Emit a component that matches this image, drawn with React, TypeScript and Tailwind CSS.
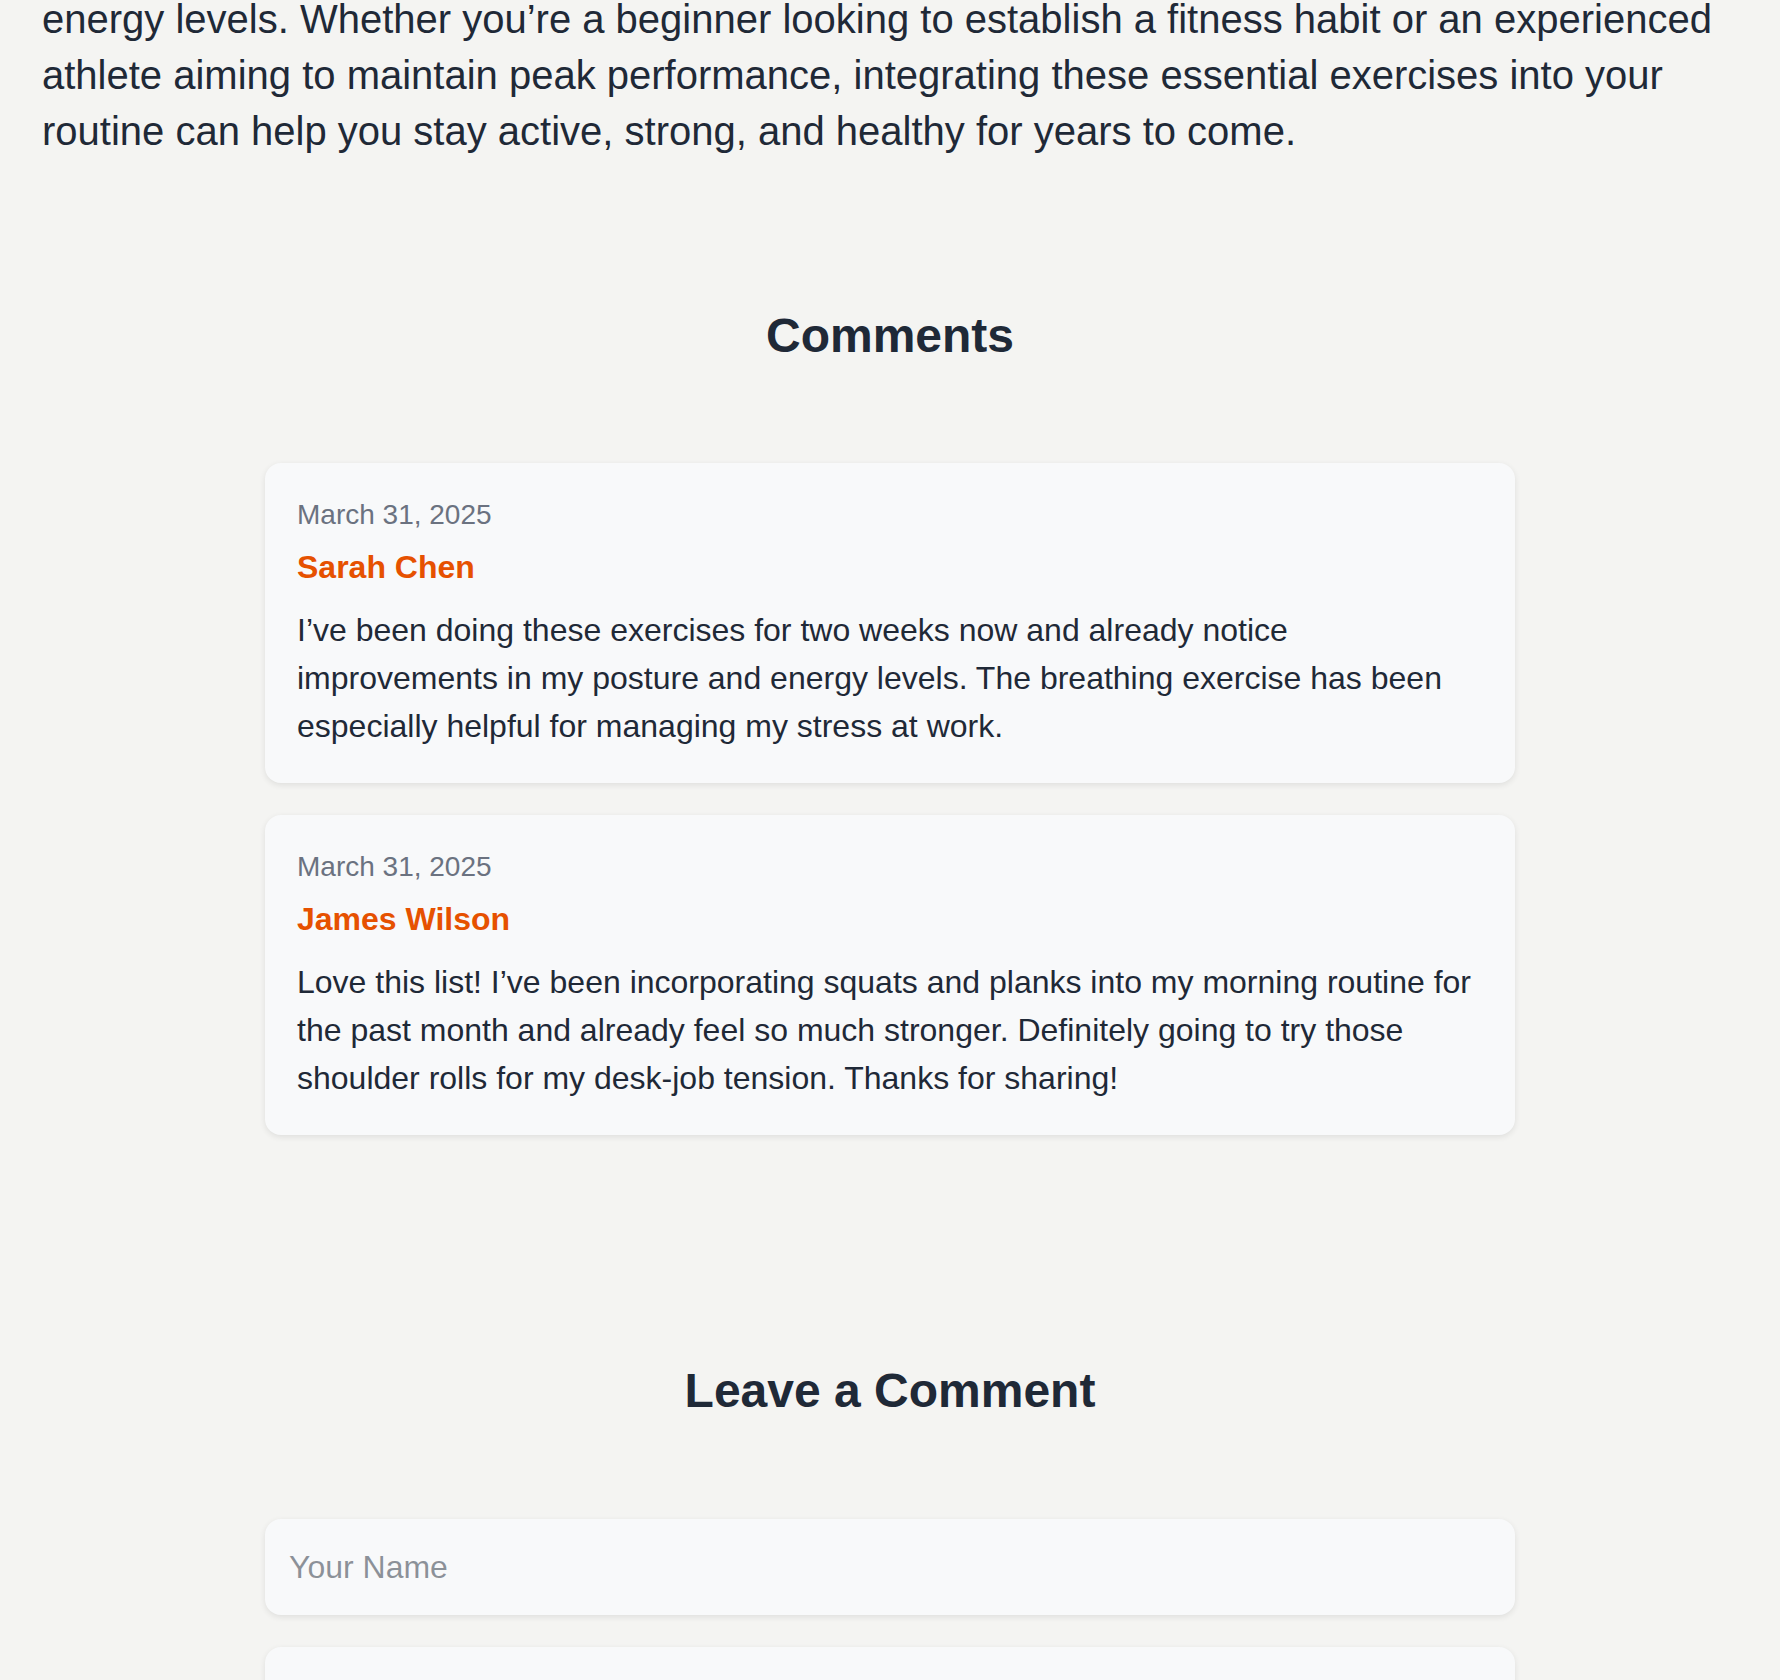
import React from "react";

const comments = [
  {
    date: "March 31, 2025",
    name: "Sarah Chen",
    text: "I’ve been doing these exercises for two weeks now and already notice improvements in my posture and energy levels. The breathing exercise has been especially helpful for managing my stress at work.",
  },
  {
    date: "March 31, 2025",
    name: "James Wilson",
    text: "Love this list! I’ve been incorporating squats and planks into my morning routine for the past month and already feel so much stronger. Definitely going to try those shoulder rolls for my desk-job tension. Thanks for sharing!",
  },
];

export default function App() {
  return (
    <div className="min-h-screen overflow-hidden bg-[#f4f4f2] font-['Liberation_Sans',Arial,sans-serif] text-[#1f2937]">
      <p className="-mt-[9px] pl-[42px] pr-[38px] text-[40px] leading-[56px]">
        energy levels. Whether you’re a beginner looking to establish a fitness habit or an experienced athlete aiming to maintain peak performance, integrating these essential exercises into your routine can help you stay active, strong, and healthy for years to come.
      </p>

      <section className="pt-[148px]">
        <h2 className="text-center text-[48px] font-bold leading-[1.2]">Comments</h2>
        <div className="mx-auto mt-[98px] flex w-[1250px] flex-col gap-8">
          {comments.map((c) => (
            <div
              key={c.name}
              className="rounded-2xl bg-[#f8f9fa] px-8 pb-[33px] pt-[31px] shadow-[0_2px_6px_rgba(0,0,0,0.09)]"
            >
              <div className="mb-[7px] text-[28px] leading-[1.5] text-[#6b7280]">{c.date}</div>
              <div className="mb-[15px] text-[32px] font-bold leading-[1.5] text-[#e65100]">{c.name}</div>
              <p className="text-[32px] leading-[1.5]">{c.text}</p>
            </div>
          ))}
        </div>
      </section>

      <section className="pt-[227px]">
        <h2 className="text-center text-[48px] font-bold leading-[1.2]">Leave a Comment</h2>
        <form className="mx-auto mt-[100px] flex w-[1250px] flex-col gap-8">
          <input
            type="text"
            placeholder="Your Name"
            className="h-[96px] w-full rounded-2xl bg-[#f8f9fa] px-6 text-[32px] leading-[1.5] shadow-[0_2px_6px_rgba(0,0,0,0.09)] outline-none"
          />
          <textarea
            placeholder="Your Comment"
            rows={5}
            className="w-full resize-none rounded-2xl bg-[#f8f9fa] p-6 text-[32px] leading-[1.5] shadow-[0_2px_6px_rgba(0,0,0,0.09)] outline-none"
          />
        </form>
      </section>
    </div>
  );
}
